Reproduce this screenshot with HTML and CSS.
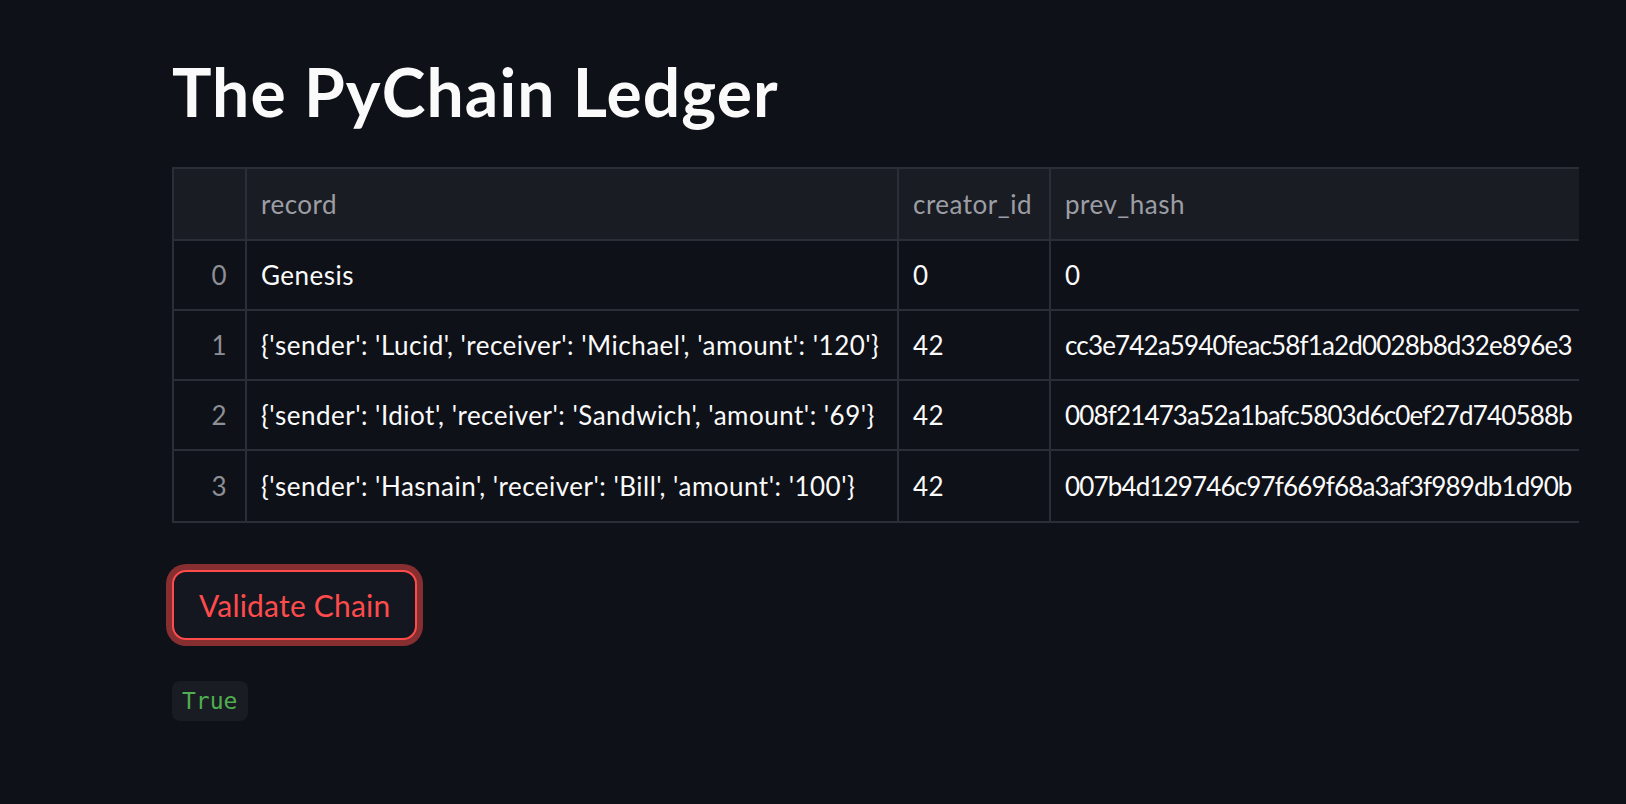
FILE: index.html
```html
<!DOCTYPE html>
<html lang="en">
<head>
<meta charset="utf-8">
<title>The PyChain Ledger</title>
<link rel="stylesheet" href="styles.css">
</head>
<body>
<main class="page">
  <h1 class="title">The PyChain Ledger</h1>
  <div class="frame">
    <table class="grid">
      <colgroup>
        <col class="c-idx"><col class="c-rec"><col class="c-cre"><col class="c-hash">
      </colgroup>
      <thead>
        <tr><th class="idx"></th><th>record</th><th>creator_id</th><th>prev_hash</th></tr>
      </thead>
      <tbody>
        <tr><td class="idx">0</td><td>Genesis</td><td>0</td><td>0</td></tr>
        <tr><td class="idx">1</td><td>{'sender': 'Lucid', 'receiver': 'Michael', 'amount': '120'}</td><td>42</td><td class="hash">cc3e742a5940feac58f1a2d0028b8d32e896e3</td></tr>
        <tr><td class="idx">2</td><td>{'sender': 'Idiot', 'receiver': 'Sandwich', 'amount': '69'}</td><td>42</td><td class="hash">008f21473a52a1bafc5803d6c0ef27d740588b</td></tr>
        <tr><td class="idx">3</td><td>{'sender': 'Hasnain', 'receiver': 'Bill', 'amount': '100'}</td><td>42</td><td class="hash">007b4d129746c97f669f68a3af3f989db1d90b</td></tr>
      </tbody>
    </table>
  </div>
  <div class="actions">
    <button class="btn" type="button">Validate Chain</button>
  </div>
  <div class="result"><code class="code">True</code></div>
</main>
</body>
</html>
```

FILE: styles.css
```css
html, body {
  margin: 0;
  padding: 0;
  background: #0e1117;
}
body {
  font-family: Lato, "Noto Sans", sans-serif;
  color: #fafafa;
}
.page {
  display: flex;
  flex-direction: column;
  align-items: flex-start;
  padding: 52px 47px 0 172px;
  min-height: 804px;
  box-sizing: border-box;
}
.title {
  margin: 0;
  font-size: 66px;
  line-height: 80px;
  font-weight: 700;
  color: #fafafa;
  letter-spacing: 1.1px;
}
.frame {
  margin-top: 35px;
  width: 1407px;
  overflow: hidden;
}
.grid {
  width: 1407px;
  table-layout: fixed;
  border-collapse: collapse;
  border: 2px solid #2b2e36;
  font-size: 26px;
  letter-spacing: 0.5px;
}
.c-idx { width: 73px; }
.c-rec { width: 652px; }
.c-cre { width: 152px; }
.c-hash { width: 530px; }
.grid th, .grid td {
  border: 2px solid #2b2e36;
  padding: 0 12px 0 14px;
  text-align: left;
  white-space: nowrap;
  overflow: hidden;
  text-overflow: clip;
  vertical-align: middle;
}
.grid th {
  height: 70px;
  background: #1a1c24;
  color: #9c9ea4;
  font-weight: 400;
}
.grid td {
  height: 68px;
  background: #0f1118;
  color: #fafafa;
}
.grid tbody tr:last-child td {
  height: 70px;
}
.grid td.hash {
  letter-spacing: -0.85px;
  padding-right: 2px;
}
.grid td.idx {
  text-align: right;
  padding: 0 18px 0 0;
  color: #8d8f95;
}
.actions {
  margin-top: 47px;
}
.btn {
  display: inline-flex;
  align-items: center;
  height: 70px;
  padding: 0 25px;
  box-sizing: border-box;
  background: #141720;
  border: 2px solid #ff4b4b;
  border-radius: 14px;
  box-shadow: 0 0 0 6px rgba(255, 75, 75, 0.5);
  color: #ff4b4b;
  font-family: Lato, "Noto Sans", sans-serif;
  font-size: 30px;
  font-weight: 400;
  letter-spacing: 0.2px;
}
.result {
  margin-top: 41px;
}
.code {
  display: inline-block;
  padding: 0 11px 0 10px;
  height: 40px;
  line-height: 40px;
  background: #1a1c23;
  border-radius: 8px;
  color: #4fae4f;
  font-family: "DejaVu Sans Mono", "Liberation Mono", monospace;
  font-size: 23px;
}
```
